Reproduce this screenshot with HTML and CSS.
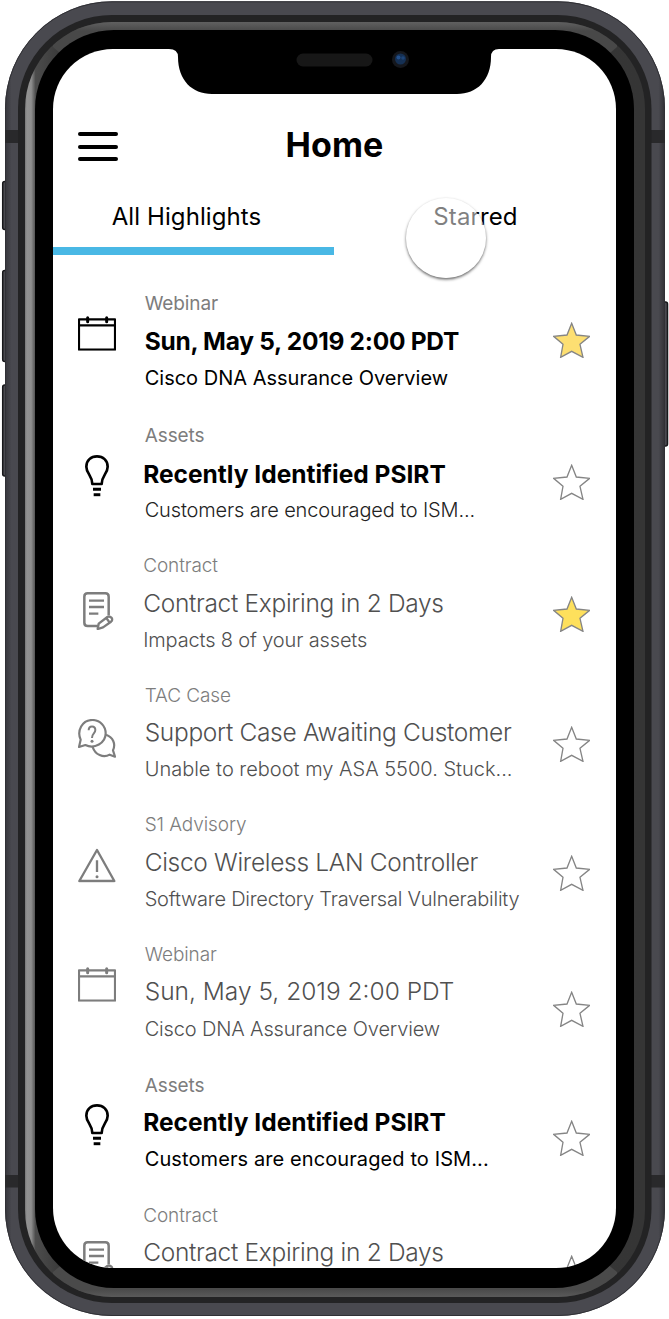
FILE: index.html
```html
<!DOCTYPE html>
<html lang="en">
<head>
<meta charset="utf-8">
<title>Home</title>
<link rel="stylesheet" href="styles.css">
</head>
<body>
<svg class="defs" width="0" height="0" aria-hidden="true">
  <symbol id="calendar" viewBox="0 0 114 104">
    <path d="M3 10H111V101H3ZM3 28H111" fill="none" stroke="currentColor" stroke-width="6.500" stroke-linejoin="round"/>
    <path d="M29 5V17M86 5V17" stroke="currentColor" stroke-width="9" stroke-linecap="round"/>
  </symbol>
  <symbol id="bulb" viewBox="0 0 72 125">
    <path d="M22 87C22 61 4 56 4 35C4 16 18 4 36 4S68 16 68 35C68 56 50 61 50 87Z" fill="none" stroke="currentColor" stroke-width="8" stroke-linejoin="round"/>
    <path d="M24 103H48M26 119H46" stroke="currentColor" stroke-width="9"/>
  </symbol>
  <symbol id="contract" viewBox="0 0 92 116">
    <path d="M45 102H14Q4 102 4 92V14Q4 4 14 4H67Q77 4 77 14V70" fill="none" stroke="currentColor" stroke-width="7.500"/>
    <path d="M18 26H63M18 45H63M18 65H46" stroke="currentColor" stroke-width="7"/>
    <path d="M44 111L47 95L73 75Q79 71 85 77Q91 83 84 89L60 106ZM70 78L80 92" fill="none" stroke="currentColor" stroke-width="7" stroke-linejoin="round"/>
  </symbol>
  <symbol id="chat" viewBox="0 0 114 117">
    <path d="M3 84L8 62C-4 36 12 3 43 3C66 3 83 21 83 43C83 73 49 91 22 78Z" fill="none" stroke="currentColor" stroke-width="6.500" stroke-linejoin="round"/>
    <path d="M84 47C105 54 114 75 105 94L111 113L95 107C76 118 51 107 44 84" fill="none" stroke="currentColor" stroke-width="6.500" stroke-linejoin="round"/>
    <path d="M32 34C32 18 52 19 52 33C52 44 42 43 42 57" fill="none" stroke="currentColor" stroke-width="6"/>
    <circle cx="42" cy="67" r="4.500" fill="currentColor"/>
  </symbol>
  <symbol id="alert" viewBox="0 0 114 104">
    <path d="M57 6L109 99H4Z" fill="none" stroke="currentColor" stroke-width="7" stroke-linejoin="round"/>
    <path d="M57 37V72" stroke="currentColor" stroke-width="7"/>
    <circle cx="57" cy="86" r="4.500" fill="currentColor"/>
  </symbol>
  <symbol id="star" viewBox="0 0 112 108">
    <path d="M56 4L70 39L110 43L81 67L90 106L56 88L23 106L30 67L2 43L42 39Z" stroke="#858585" stroke-width="4"/>
  </symbol>
</svg>

<div class="phone">
  <svg class="frame" viewBox="0 0 669 1319" aria-hidden="true">
    <defs>
      <linearGradient id="body" x1="0" x2="1" y1="0" y2="0">
        <stop offset="0" stop-color="#35353b"/><stop offset=".01" stop-color="#49494f"/>
        <stop offset=".99" stop-color="#49494f"/><stop offset="1" stop-color="#303035"/>
      </linearGradient>
      <linearGradient id="bevel" gradientUnits="userSpaceOnUse" x1="25" x2="645" y1="0" y2="0">
        <stop offset="0" stop-color="#777"/><stop offset=".003" stop-color="#929292"/>
        <stop offset=".010" stop-color="#8e8e8e"/><stop offset=".017" stop-color="#4c4c4c"/>
        <stop offset=".06" stop-color="#383838"/><stop offset="1" stop-color="#353535"/>
      </linearGradient>
      <linearGradient id="rim" gradientUnits="userSpaceOnUse" x1="0" x2="0" y1="22" y2="1297">
        <stop offset="0" stop-color="#606060"/><stop offset=".007" stop-color="#484848"/>
        <stop offset=".994" stop-color="#4a4a4a"/><stop offset="1" stop-color="#5a5a5a"/>
      </linearGradient>
      <clipPath id="rimclip"><rect x="25" y="22" width="620" height="1275" rx="87"/></clipPath>
    </defs>
    <g fill="#49494f" stroke="#17171a" stroke-width="1.5">
      <rect x="2.7" y="181.5" width="7" height="48" rx="2"/>
      <rect x="2.7" y="270.5" width="7" height="91" rx="2"/>
      <rect x="2.7" y="385" width="7" height="91" rx="2"/>
      <rect x="660" y="302" width="7.500" height="144" rx="2"/>
    </g>
    <rect x="5" y="1.3" width="660" height="1314.7" rx="107" fill="url(#body)"/>
    <rect x="5.5" y="1.8" width="659" height="1313.7" rx="106.5" fill="none" stroke="#303035"/>
    <path d="M5 130H18V143H5ZM651 130H665V143H651ZM5 1175H18V1187.500H5ZM651 1175H665V1187.500H651Z" fill="#29292b"/>
    <rect x="18" y="15" width="633.500" height="1288" rx="94" fill="#232324"/>
    <rect x="25" y="22" width="620" height="1275" rx="87" fill="url(#bevel)"/>
    <path d="M53 47L80 70H590L617 47V0H53ZM53 1272L80 1250H590L617 1272V1319H53Z" fill="url(#rim)" clip-path="url(#rimclip)"/>
    <rect x="35" y="30" width="599" height="1258" rx="79" fill="#000"/>
  </svg>

  <div class="screen">
    <header class="header">
      <span class="menu"><i></i><i></i><i></i></span>
      <h1 class="heading">Home</h1>
    </header>
    <nav class="tabs">
      <a class="tab active">All Highlights</a>
      <a class="tab">Starred</a>
    </nav>
    <main class="list">
      <article class="item fresh">
        <svg class="icon calendar"><use href="#calendar"/></svg>
        <div class="copy"><p class="kind">Webinar</p><h2 class="title tight">Sun, May 5, 2019 2:00 PDT</h2><p class="detail">Cisco DNA Assurance Overview</p></div>
        <svg class="star on pale"><use href="#star"/></svg>
      </article>
      <article class="item fresh mixed">
        <svg class="icon bulb"><use href="#bulb"/></svg>
        <div class="copy"><p class="kind">Assets</p><h2 class="title outdent">Recently Identified PSIRT</h2><p class="detail snug">Customers are encouraged to ISM...</p></div>
        <svg class="star"><use href="#star"/></svg>
      </article>
      <article class="item">
        <svg class="icon contract"><use href="#contract"/></svg>
        <div class="copy outdent"><p class="kind">Contract</p><h2 class="title tight">Contract Expiring in 2 Days</h2><p class="detail snug">Impacts 8 of your assets</p></div>
        <svg class="star on"><use href="#star"/></svg>
      </article>
      <article class="item">
        <svg class="icon chat"><use href="#chat"/></svg>
        <div class="copy"><p class="kind">TAC Case</p><h2 class="title tight">Support Case Awaiting Customer</h2><p class="detail">Unable to reboot my ASA 5500. Stuck...</p></div>
        <svg class="star"><use href="#star"/></svg>
      </article>
      <article class="item">
        <svg class="icon alert"><use href="#alert"/></svg>
        <div class="copy"><p class="kind">S1 Advisory</p><h2 class="title tight">Cisco Wireless LAN Controller</h2><p class="detail tight">Software Directory Traversal Vulnerability</p></div>
        <svg class="star"><use href="#star"/></svg>
      </article>
      <article class="item">
        <svg class="icon calendar"><use href="#calendar"/></svg>
        <div class="copy"><p class="kind">Webinar</p><h2 class="title">Sun, May 5, 2019 2:00 PDT</h2><p class="detail snug">Cisco DNA Assurance Overview</p></div>
        <svg class="star low"><use href="#star"/></svg>
      </article>
      <article class="item fresh">
        <svg class="icon bulb"><use href="#bulb"/></svg>
        <div class="copy"><p class="kind">Assets</p><h2 class="title outdent">Recently Identified PSIRT</h2><p class="detail loose">Customers are encouraged to ISM...</p></div>
        <svg class="star low"><use href="#star"/></svg>
      </article>
      <article class="item">
        <svg class="icon contract"><use href="#contract"/></svg>
        <div class="copy outdent"><p class="kind">Contract</p><h2 class="title tight">Contract Expiring in 2 Days</h2></div>
        <svg class="star lowest"><use href="#star"/></svg>
      </article>
    </main>
  </div>
  <svg class="notch" viewBox="0 0 330 46" aria-hidden="true">
    <path d="M0 0H330V1Q322 1 322 9C322 32 308 46 288 46H43C23 46 9 32 9 9Q9 1 0 1Z"/>
    <rect x="127.500" y="5.500" width="76" height="13" rx="6.500" fill="#171717"/>
    <circle cx="231.500" cy="11.500" r="8.500" fill="#15171c"/>
    <circle cx="231.500" cy="11" r="5.500" fill="#153054"/>
    <circle cx="229.500" cy="9.500" r="2" fill="#23508c"/><circle cx="234" cy="10" r="1.800" fill="#1d4478"/>
  </svg>
  <span class="touch"></span>
</div>
</body>
</html>
```
FILE: styles.css
```css
body { margin: 0; background: #fff; font-family: Inter, sans-serif; color: #000; overflow: hidden; }
h1, h2, p { margin: 0; }
.defs { position: absolute; }
.phone { position: relative; width: 669px; height: 1319px; overflow: hidden; }
.frame { position: absolute; inset: 0; width: 669px; height: 1319px; }

.screen {
  position: absolute; left: 53px; top: 49px; width: 563px; height: 1219px;
  border-radius: 60px; background: #fff; overflow: hidden;
}
.notch { position: absolute; left: 169px; top: 48px; width: 330px; height: 46px; }
.touch {
  position: absolute; left: 406px; top: 198px; width: 80px; height: 80px;
  border-radius: 50%; background: rgba(255, 255, 255, .5);
  box-shadow: 0 1.500px 3px rgba(0, 0, 0, .6);
}

.header {
  box-sizing: border-box; display: grid; grid-template-columns: 1fr auto 1fr;
  height: 128px; padding: 76px 25px 0;
}
.menu { display: flex; flex-direction: column; gap: 8.300px; width: 39.500px; padding-top: 7.300px; }
.menu i { height: 4px; border-radius: 2px; background: #000; }
.heading { font-size: 34px; line-height: 40px; font-weight: 700; letter-spacing: .1px; }

.tabs { display: grid; grid-template-columns: 281px 1fr; height: 78px; }
.tab {
  box-sizing: border-box; height: 78px; padding-top: 25px; padding-left: 1px;
  font-size: 24px; line-height: 30px; letter-spacing: .1px; text-align: center;
}
.active { border-bottom: 8px solid #49b8e5; padding-left: 0; text-indent: -14px; }

.list {
  display: grid; padding-top: 36.400px;
  grid-template-rows: 132px 130px 129.400px 129.700px 129.700px 130.600px 130px 130px;
}
.item { display: grid; grid-template-columns: 91.700px 1fr 63px; align-items: start; color: #7d7d7d; }
.copy { padding-top: 1px; white-space: nowrap; }
.kind { font-size: 19px; line-height: 24px; font-weight: 300; letter-spacing: -.1px; }
.title { margin-top: 9.300px; font-size: 24.500px; line-height: 30px; font-weight: 300; color: #505050; }
.detail { margin-top: 9.400px; font-size: 20px; line-height: 26px; font-weight: 300; color: #505050; }
.fresh { color: #000; }
.fresh .kind { font-weight: 400; color: #7d7d7d; }
.fresh .title { font-weight: 700; color: #000; }
.fresh .detail { font-weight: 400; color: #000; }
.mixed .title { margin: 10.700px 0 -1px; }
.mixed .detail { font-weight: 300; color: #222; }

.title.tight { letter-spacing: -.32px; }
.fresh .title.tight { letter-spacing: -.27px; }
.detail.tight { letter-spacing: -.24px; }
.snug { letter-spacing: -.15px; }
.detail.loose { letter-spacing: .1px; }
.outdent { margin-left: -1.500px !important; }

.icon { display: block; margin-left: 25px; }
.calendar { width: 38px; height: 34.700px; margin-top: 25px; }
.bulb { width: 24px; height: 41.700px; margin: 31.500px 0 0 32px; }
.contract { width: 30.700px; height: 38.700px; margin: 38.300px 0 0 30px; }
.chat { width: 38px; height: 39px; margin-top: 36px; }
.alert { width: 38px; height: 34.700px; margin-top: 36px; }

.star { display: block; width: 37.300px; height: 36px; margin-top: 43px; fill: none; }
.item.fresh .star { margin-top: 40.500px; }
.item .star.on { fill: #fee05c; }
.item .star.pale { fill: #fddf72; margin-top: 30.800px; }
.item .star.low { margin-top: 48.600px; }
.item.fresh .star.low { margin-top: 47px; }
.item .star.lowest { margin-top: 52px; }
```
